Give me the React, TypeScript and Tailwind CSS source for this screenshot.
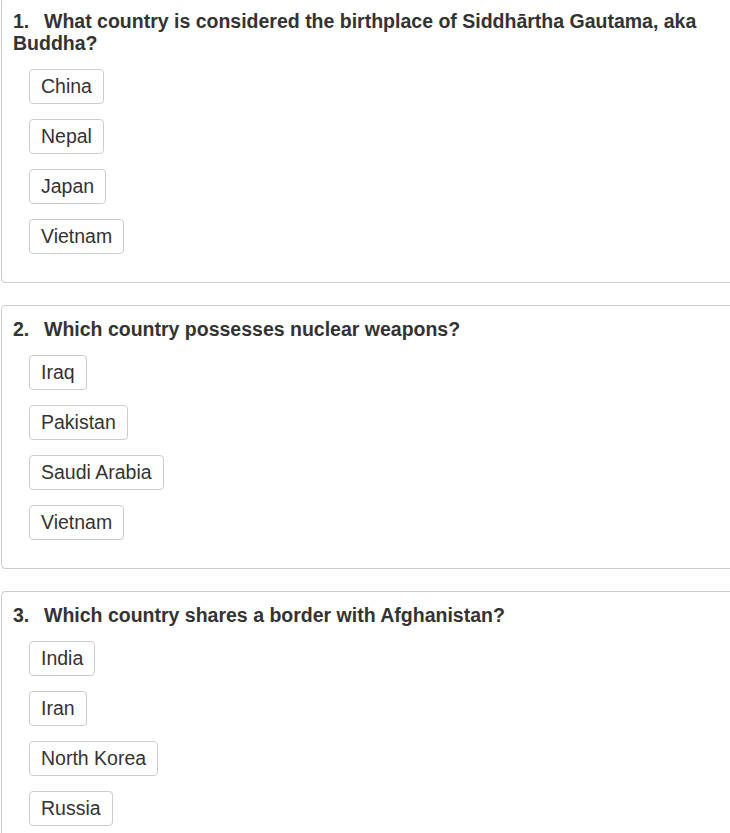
import React from "react";

interface Question {
  text: string;
  answers: string[];
}

const questions: Question[] = [
  {
    text: "What country is considered the birthplace of Siddhārtha Gautama, aka Buddha?",
    answers: ["China", "Nepal", "Japan", "Vietnam"],
  },
  {
    text: "Which country possesses nuclear weapons?",
    answers: ["Iraq", "Pakistan", "Saudi Arabia", "Vietnam"],
  },
  {
    text: "Which country shares a border with Afghanistan?",
    answers: ["India", "Iran", "North Korea", "Russia"],
  },
];

function QuestionCard({ q, n }: { q: Question; n: number }) {
  return (
    <section className="w-[760px] ml-[1px] mb-[22px] first:mt-[-3px] border border-[#cccccc] rounded-[4px] pt-[12px] pb-[13px] pl-[11px]">
      <h4 className="text-[19.5px] leading-[22px] font-bold text-[#333333] max-w-[720px]">
        <span className="inline-block w-[31px]">{n}.</span>
        {q.text}
      </h4>
      <div className="flex flex-col items-start gap-[15px] mt-[15px] pl-[16px] pb-[15px]">
        {q.answers.map((a) => (
          <button
            key={a}
            className="border border-[#cccccc] rounded-[4px] bg-white px-[11px] py-[6px] text-[19.5px] leading-[21px] text-[#333333]"
          >
            {a}
          </button>
        ))}
      </div>
    </section>
  );
}

export default function App() {
  return (
    <div className="h-[833px] w-[730px] overflow-hidden bg-white font-['Liberation_Sans',Arial,sans-serif]">
      {questions.map((q, i) => (
        <QuestionCard key={i} q={q} n={i + 1} />
      ))}
    </div>
  );
}
